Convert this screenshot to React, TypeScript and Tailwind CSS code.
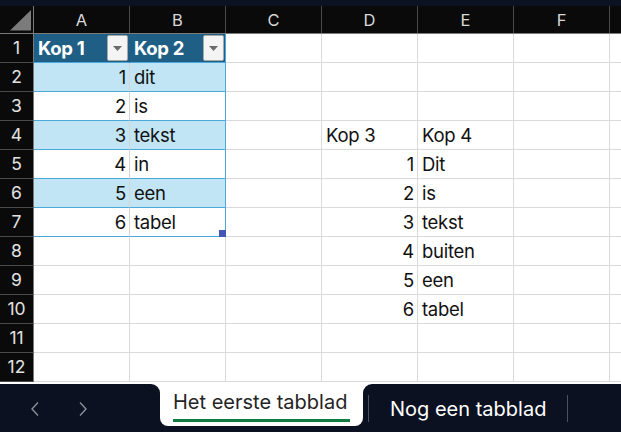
import React from 'react';

const COLS = ['A', 'B', 'C', 'D', 'E', 'F', ''];
const FONT = { fontFamily: 'Inter, "Noto Sans", sans-serif' };

type CellKind = 'plain' | 'th' | 'band' | 'body';

interface CellDef {
  text?: string;
  align?: 'left' | 'right';
  kind?: CellKind;
  last?: boolean; // right column of the table
  bottom?: boolean; // last row of the table
}

const tableWords = ['dit', 'is', 'tekst', 'in', 'een', 'tabel'];
const otherWords = ['Dit', 'is', 'tekst', 'buiten', 'een', 'tabel'];

function buildRow(r: number): CellDef[] {
  const cells: CellDef[] = COLS.map(() => ({}));
  if (r === 1) {
    cells[0] = { text: 'Kop 1', kind: 'th' };
    cells[1] = { text: 'Kop 2', kind: 'th', last: true };
  } else if (r <= 7) {
    const kind: CellKind = r % 2 === 0 ? 'band' : 'body';
    cells[0] = { text: String(r - 1), align: 'right', kind, bottom: r === 7 };
    cells[1] = { text: tableWords[r - 2], kind, last: true, bottom: r === 7 };
  }
  if (r === 4) {
    cells[3] = { text: 'Kop 3' };
    cells[4] = { text: 'Kop 4' };
  } else if (r >= 5 && r <= 10) {
    cells[3] = { text: String(r - 4), align: 'right' };
    cells[4] = { text: otherWords[r - 5] };
  }
  return cells;
}

function FilterButton() {
  return (
    <div className="ml-auto mr-[1px] mt-[1px] flex h-[26px] w-[21px] items-center justify-center self-start rounded-[2px] border border-[#a8a8a8] bg-[#f4f4f4]">
      <svg width="9" height="5" viewBox="0 0 9 5">
        <path d="M0 0h9L4.5 5z" fill="#6b6b6b" />
      </svg>
    </div>
  );
}

function Cell({ cell }: { cell: CellDef }) {
  let cls = 'border-r border-b border-r-[#dadada] border-b-[#dadada] bg-white text-[#111]';
  if (cell.kind === 'th') {
    cls = `bg-[#1f5f85] text-white font-bold border-b border-b-[#4aa8dc] border-r ${
      cell.last ? 'border-r-[#4aa8dc]' : 'border-r-[#1f5f85]'
    }`;
  } else if (cell.kind === 'band' || cell.kind === 'body') {
    cls = `${cell.kind === 'band' ? 'bg-[#c1e5f5]' : 'bg-white'} text-[#111] border-b border-b-[#4aa8dc] border-r ${
      cell.last ? 'border-r-[#4aa8dc]' : 'border-r-[#d4d4d4]'
    }`;
  }
  return (
    <div
      className={`relative flex h-[29px] w-[96px] shrink-0 items-center ${
        cell.align === 'right' ? 'justify-end pr-[3px]' : 'pl-[4px]'
      } ${cls}`}
    >
      <span className="text-[18.5px] leading-none tracking-[-0.015em]">{cell.text}</span>
      {cell.kind === 'th' && <FilterButton />}
      {cell.last && cell.bottom && (
        <div className="absolute bottom-[-1px] right-[-1px] h-[7px] w-[7px] bg-[#4355b5]" />
      )}
    </div>
  );
}

function Chevron({ dir }: { dir: 'left' | 'right' }) {
  return (
    <svg width="10" height="16" viewBox="0 0 10 16" fill="none">
      <path
        d={dir === 'left' ? 'M8 1.5L2 8l6 6.5' : 'M2 1.5L8 8l-6 6.5'}
        stroke="#8a8f99"
        strokeWidth="1.4"
      />
    </svg>
  );
}

export default function App() {
  const rows = Array.from({ length: 12 }, (_, i) => i + 1);

  return (
    <div className="flex h-[432px] w-[621px] flex-col overflow-hidden bg-white" style={FONT}>
      <div className="h-[6px] shrink-0 bg-[#0b1222]" />

      {/* column headers */}
      <div className="flex h-[28px] shrink-0 border-b border-b-[#7a7a7a] bg-[#0a0a0a]">
        <div className="relative w-[34px] shrink-0 border-r border-r-[#7a7a7a]">
          <svg className="absolute left-0 top-0" width="34" height="28" viewBox="0 0 34 28">
            <path d="M10 24.5L31 24.5L31 4z" fill="#7b7b7b" />
          </svg>
        </div>
        {COLS.map((c, i) => (
          <div
            key={i}
            className="flex w-[96px] shrink-0 items-center justify-center border-r border-r-[#4a4a4a] pt-[2px] text-[16.5px] text-[#d8d8d8]"
          >
            {c}
          </div>
        ))}
      </div>

      {/* rows */}
      {rows.map((r) => (
        <div key={r} className="flex shrink-0">
          <div className="flex h-[29px] w-[34px] shrink-0 items-center justify-center border-b border-r border-b-[#4a4a4a] border-r-[#7a7a7a] bg-[#0a0a0a] text-[17.5px] text-[#e2e2e2]">
            {r}
          </div>
          {buildRow(r).map((cell, i) => (
            <Cell key={i} cell={cell} />
          ))}
        </div>
      ))}

      {/* sheet tabs */}
      <div className="flex flex-1 bg-white pt-[2px]">
        <div className="flex w-[160px] shrink-0 items-center gap-[38px] rounded-tr-[9px] bg-[#0b1120] pl-[30px] pt-[2px]">
          <Chevron dir="left" />
          <Chevron dir="right" />
        </div>
        <div className="w-[203px] shrink-0 bg-[#0b1120]">
          <div className="flex h-[42px] flex-col rounded-b-[8px] bg-white px-[13px] pt-[5px]">
            <span className="text-[20px] leading-[26px] text-[#242424]">Het eerste tabblad</span>
            <div className="mt-[4px] h-[3px] w-full bg-[#107c41]" />
          </div>
        </div>
        <div className="flex flex-1 items-center rounded-tl-[9px] bg-[#0b1120] pl-[5px]">
          <div className="h-[27px] w-px bg-[#4b5160]" />
          <span className="px-[21px] pt-[2px] text-[20px] text-white">Nog een tabblad</span>
          <div className="h-[27px] w-px bg-[#4b5160]" />
        </div>
      </div>
    </div>
  );
}
